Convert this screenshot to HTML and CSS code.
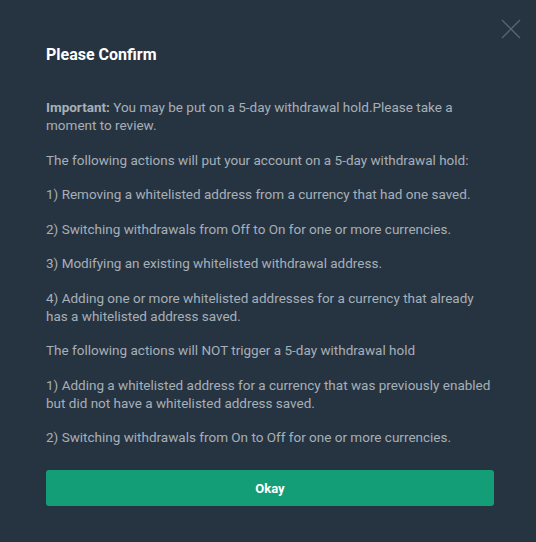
FILE: index.html
```html
<!DOCTYPE html>
<html>
<head>
<meta charset="utf-8">
<link rel="stylesheet" href="styles.css">
</head>
<body>
<div class="modal">
  <button class="close" aria-label="Close">
    <svg width="20" height="20" viewBox="0 0 20 20"><path d="M1 1L19 19M19 1L1 19" stroke="#56646f" stroke-width="1.4" fill="none"/></svg>
  </button>
  <h2 class="title">Please Confirm</h2>
  <div class="content">
    <p><strong>Important:</strong> You may be put on a 5-day withdrawal hold.Please take a moment to review.</p>
    <p>The following actions will put your account on a 5-day withdrawal hold:</p>
    <p>1) Removing a whitelisted address from a currency that had one saved.</p>
    <p>2) Switching withdrawals from Off to On for one or more currencies.</p>
    <p>3) Modifying an existing whitelisted withdrawal address.</p>
    <p>4) Adding one or more whitelisted addresses for a currency that already has a whitelisted address saved.</p>
    <p>The following actions will NOT trigger a 5-day withdrawal hold</p>
    <p>1) Adding a whitelisted address for a currency that was previously enabled but did not have a whitelisted address saved.</p>
    <p>2) Switching withdrawals from On to Off for one or more currencies.</p>
  </div>
  <button class="okay">Okay</button>
</div>
</body>
</html>
```
FILE: styles.css
```css
html, body {
  margin: 0;
  padding: 0;
  background: #263442;
}
body {
  font-family: Roboto, "Liberation Sans", sans-serif;
}
.modal {
  position: relative;
  width: 536px;
  height: 542px;
  box-sizing: border-box;
  padding: 45px 42px 0 46px;
  background: #263442;
}
.close {
  position: absolute;
  top: 19px;
  right: 15px;
  background: none;
  border: none;
  padding: 0;
  width: 20px;
  height: 20px;
  cursor: pointer;
}
.close svg { display: block; }
.title {
  margin: 0;
  font-size: 16px;
  font-weight: 700;
  color: #ffffff;
  line-height: 20px;
}
.content {
  margin-top: 33px;
  color: #a7afb7;
  font-size: 13.5px;
  line-height: 18px;
}
.content p {
  margin: 0 0 16.5px 0;
}
.content p:last-child {
  margin-bottom: 0;
}
.content strong {
  font-weight: 700;
}
.okay {
  display: block;
  width: 448px;
  height: 36px;
  margin-top: 24px;
  border: none;
  border-radius: 3px;
  background: #139e78;
  color: #ffffff;
  font-family: Roboto, "Liberation Sans", sans-serif;
  font-size: 13px;
  font-weight: 700;
  cursor: pointer;
}
```
